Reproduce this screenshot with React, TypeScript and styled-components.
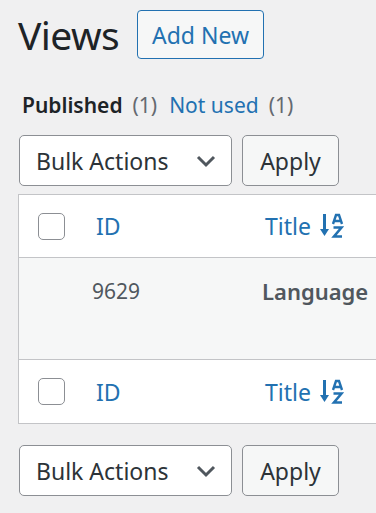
import React from 'react'
import styled, { createGlobalStyle } from 'styled-components'

const GlobalStyle = createGlobalStyle`
  html, body {
    margin: 0;
    padding: 0;
    background: #f0f0f1;
    overflow: hidden;
  }
  body {
    font-family: "Noto Sans", "Open Sans", sans-serif;
    color: #3c434a;
  }
`

const Wrap = styled.div`
  padding: 10px 0 0 18px;
  width: 376px;
  box-sizing: border-box;
  overflow: hidden;
`

const HeadRow = styled.div`
  display: flex;
  align-items: center;
  gap: 18px;
  height: 49px;
`

const Title = styled.h1`
  margin: 0;
  font-size: 39px;
  font-weight: 400;
  color: #1d2327;
  line-height: 49px;
  letter-spacing: -0.6px;
`

const AddNew = styled.button`
  height: 49px;
  width: 127px;
  border: 1px solid #2271b1;
  border-radius: 4px;
  background: #f6f7f7;
  color: #2271b1;
  font-family: inherit;
  font-size: 23px;
  padding: 0;
`

const Views = styled.ul`
  list-style: none;
  margin: 31px 0 0 4px;
  padding: 0;
  display: flex;
  gap: 12px;
  font-size: 21px;
  line-height: 30px;
`

const ViewItem = styled.li<{ $current?: boolean }>`
  color: ${p => (p.$current ? '#1d2327' : '#2271b1')};
  font-weight: ${p => (p.$current ? 600 : 400)};
`

const Count = styled.span`
  color: #646970;
  font-weight: 400;
  margin-left: 10px;
`

const NavBar = styled.div<{ $top?: boolean }>`
  display: flex;
  gap: 10px;
  margin: ${p => (p.$top ? '15px 0 8px 1px' : '21px 0 0 1px')};
`

const Select = styled.div`
  width: 213px;
  height: 51px;
  box-sizing: border-box;
  border: 1px solid #8c8f94;
  border-radius: 5px;
  background: #fff;
  display: flex;
  align-items: center;
  justify-content: space-between;
  padding: 0 15px 0 16px;
  font-size: 23px;
  color: #2c3338;
`

const Apply = styled.button`
  width: 97px;
  height: 51px;
  border: 1px solid #8c8f94;
  border-radius: 5px;
  background: #f6f7f7;
  color: #2c3338;
  font-family: inherit;
  font-size: 23px;
  padding: 0;
`

const Table = styled.div`
  width: 560px;
  border: 1px solid #c3c4c7;
  background: #fff;
`

type Kind = 'head' | 'body' | 'foot'

const Row = styled.div<{ $kind: Kind }>`
  display: grid;
  grid-template-columns: 63px 170px 1fr;
  align-items: ${p => (p.$kind === 'body' ? 'start' : 'center')};
  height: ${p => (p.$kind === 'body' ? '101px' : p.$kind === 'head' ? '62px' : '63px')};
  background: ${p => (p.$kind === 'body' ? '#f6f7f7' : '#fff')};
  border-top: ${p => (p.$kind === 'foot' ? '1px solid #c3c4c7' : 'none')};
  border-bottom: ${p => (p.$kind === 'head' ? '1px solid #c3c4c7' : 'none')};
`

const CheckCell = styled.div`
  padding-left: 19px;
  display: flex;
  align-items: center;
`

const Check = styled.span`
  width: 27px;
  height: 27px;
  box-sizing: border-box;
  border: 1.5px solid #8c8f94;
  border-radius: 5px;
  background: #fff;
`

const HeadLink = styled.a<{ $shift: number }>`
  padding-left: ${p => p.$shift}px;
  color: #2271b1;
  font-size: 23px;
  display: flex;
  align-items: center;
  gap: 9px;
  text-decoration: none;
`

const Cell = styled.div<{ $strong?: boolean }>`
  padding: 16px 0 0 10px;
  font-size: ${p => (p.$strong ? '22px' : '21px')};
  font-weight: ${p => (p.$strong ? 600 : 400)};
  color: #50575e;
  line-height: 34px;
`

const Chevron = () => (
  <svg width="20" height="14" viewBox="0 0 20 14">
    <path d="M2 3 L10 11 L18 3" fill="none" stroke="#50575e" strokeWidth="3" />
  </svg>
)

const SortIcon = () => (
  <svg width="24" height="26" viewBox="0 0 24 26">
    <path d="M4.5 1 V20" stroke="#2271b1" strokeWidth="3" />
    <path d="M0 16 L4.5 23 L9 16 Z" fill="#2271b1" />
    <path d="M13 11 L16 2 L19 2 L22 11 M14.2 8 H20.8" fill="none" stroke="#2271b1" strokeWidth="2.4" />
    <path d="M13.5 14.5 H21.5 L14 23.5 H22" fill="none" stroke="#2271b1" strokeWidth="2.6" />
  </svg>
)

const HeaderRow = ({ kind }: { kind: Kind }) => (
  <Row $kind={kind}>
    <CheckCell>
      <Check />
    </CheckCell>
    <HeadLink $shift={14}>ID</HeadLink>
    <HeadLink $shift={13}>
      Title <SortIcon />
    </HeadLink>
  </Row>
)

const BulkNav = ({ top }: { top?: boolean }) => (
  <NavBar $top={top}>
    <Select>
      Bulk Actions
      <Chevron />
    </Select>
    <Apply>Apply</Apply>
  </NavBar>
)

export default function App() {
  return (
    <Wrap>
      <GlobalStyle />
      <HeadRow>
        <Title>Views</Title>
        <AddNew>Add New</AddNew>
      </HeadRow>
      <Views>
        <ViewItem $current>
          Published<Count>(1)</Count>
        </ViewItem>
        <ViewItem>
          Not used<Count>(1)</Count>
        </ViewItem>
      </Views>
      <BulkNav top />
      <Table>
        <HeaderRow kind="head" />
        <Row $kind="body">
          <div />
          <Cell>9629</Cell>
          <Cell $strong>Language</Cell>
        </Row>
        <HeaderRow kind="foot" />
      </Table>
      <BulkNav />
    </Wrap>
  )
}
